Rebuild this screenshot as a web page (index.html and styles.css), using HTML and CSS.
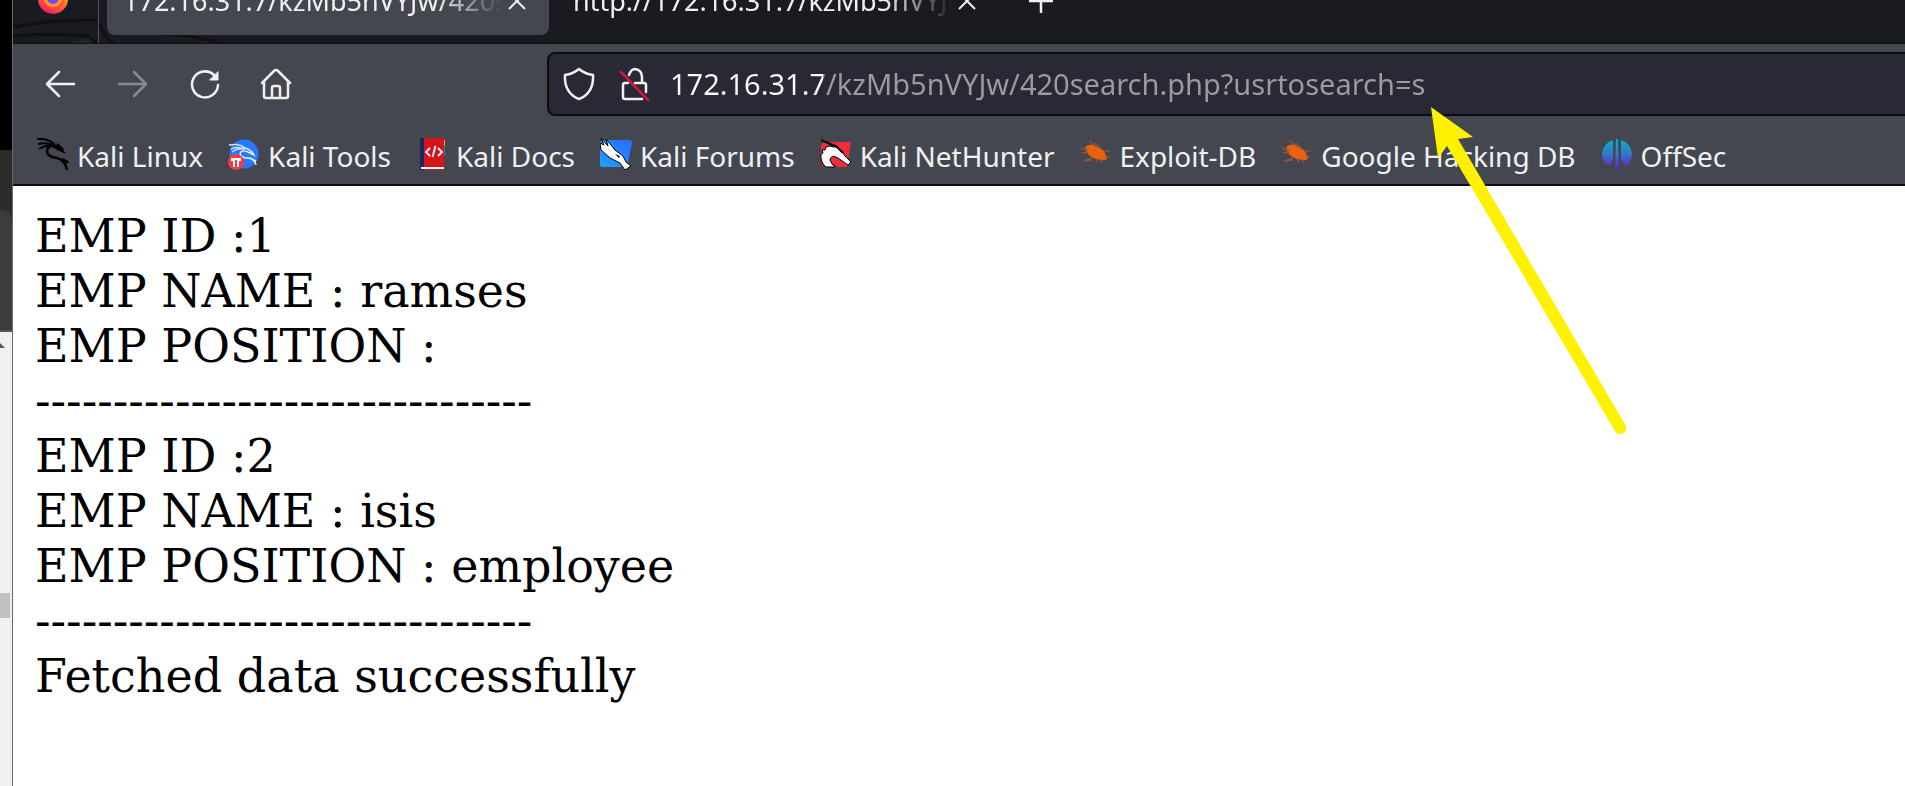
FILE: index.html
```html
<!DOCTYPE html>
<html lang="en">
<head>
<meta charset="utf-8">
<title>172.16.31.7/kzMb5nVYJw/420search.php</title>
<link rel="stylesheet" href="styles.css">
</head>
<body>
<aside class="behind">
  <div class="behind-dark"></div>
  <div class="behind-head"><div class="behind-tab"></div></div>
  <div class="behind-scroll">
    <svg class="behind-arrow" width="5" height="5" viewBox="0 0 5 5"><path d="M0 0L5 5H0Z" fill="#555"/></svg>
    <div class="behind-thumb"></div>
  </div>
</aside>
<div class="browser">
  <header class="tabstrip">
    <svg class="swirl" width="240" height="44" viewBox="0 0 240 44" fill="none"><path d="M0 27Q40 19 84 20" stroke="#0f1014" stroke-width="3"/><path d="M0 36Q40 33 74 36L84 44" stroke="#0f1014" stroke-width="3"/><path d="M52 44L76 38L80 44Z" fill="#23242b"/><path d="M86 24Q92 38 102 44M150 34Q180 35 212 44" stroke="#0f1014" stroke-width="3"/></svg>
    <div class="pinned">
      <svg width="32" height="32" viewBox="0 0 32 32"><defs><linearGradient id="ff" x1=".8" y1="0" x2=".3" y2="1"><stop offset="0" stop-color="#ffe03a"/><stop offset=".5" stop-color="#ff7a1f"/><stop offset="1" stop-color="#f5156c"/></linearGradient></defs><circle cx="16" cy="16" r="15" fill="url(#ff)"/><path d="M6 14Q10 25 21 23Q27 20 26 11Q29 22 21 26Q10 29 6 14Z" fill="#ff4b3a"/><circle cx="16" cy="15" r="9" fill="#ff9b26"/><circle cx="16" cy="15" r="6" fill="#7a4be8"/></svg>
    </div>
    <div class="tab tab-active">
      <button class="tab-title">172.16.31.7/kzMb5nVYJw/420search.php</button>
      <button class="tab-close" aria-label="Close tab"><svg width="18" height="18" viewBox="0 0 18 18" fill="none" stroke="#f0f0f0" stroke-width="2"><path d="M1 1L17 17M17 1L1 17"/></svg></button>
    </div>
    <div class="tab">
      <button class="tab-title">http://172.16.31.7/kzMb5nVYJw/index.php</button>
      <button class="tab-close" aria-label="Close tab"><svg width="18" height="18" viewBox="0 0 18 18" fill="none" stroke="#f0f0f0" stroke-width="2"><path d="M1 1L17 17M17 1L1 17"/></svg></button>
    </div>
    <button class="newtab" aria-label="New tab"><svg width="24" height="24" viewBox="0 0 24 24" fill="none" stroke="#f0f0f0" stroke-width="2.500"><path d="M12 0V24M0 12H24"/></svg></button>
  </header>
  <nav class="toolbar">
    <div class="navs">
      <button aria-label="Back"><svg width="32" height="32" viewBox="0 0 32 32" class="line"><path d="M29 16H3M14 4L2 16L14 28"/></svg></button>
      <button aria-label="Forward" disabled><svg width="32" height="32" viewBox="0 0 32 32" class="line"><path d="M2 16H28M17 4L29 16L17 28"/></svg></button>
      <button aria-label="Reload"><svg width="32" height="32" viewBox="0 0 32 32" class="line"><path d="M25 7A13 13 0 1 0 29 17"/><path d="M29 4V12H21Z" fill="#f0f0f0" stroke-width="1"/></svg></button>
      <button aria-label="Home"><svg width="32" height="32" viewBox="0 0 32 32" class="line"><path d="M1 15L13 3Q15 1 17 3L29 15M3 14V28Q3 30 5 30H25Q27 30 27 28V14M11 30V20Q11 18 13 18H17Q19 18 19 20V30"/></svg></button>
    </div>
    <div class="urlbar">
      <div class="site-icons">
        <svg width="32" height="34" viewBox="0 0 32 34" class="line"><path d="M16 2Q22 7 30 8Q31 26 16 32Q1 26 2 8Q10 7 16 2Z"/></svg>
        <svg width="32" height="34" viewBox="0 0 32 34" class="line"><path d="M10 8Q12 2 16 2Q23 3 23 10V16M16 16H25Q27 16 27 18V25M9 16H6Q4 16 4 18V30Q4 32 6 32H23"/><path d="M2 5L29 33" stroke="#e8123f"/></svg>
      </div>
      <input class="url" type="text" aria-label="Address" value="172.16.31.7/kzMb5nVYJw/420search.php?usrtosearch=s">
    </div>
  </nav>
  <nav class="bookmarks">
    <a href="#"><svg width="32" height="32" viewBox="0 0 32 32" fill="none" stroke="#000" stroke-width="2"><path d="M0 1Q12 0 18 7M1 6Q11 4 18 8M2 11Q8 7 17 8"/><path d="M17 7Q10 8 10 14Q11 19 20 20Q28 22 30 32M23 21Q29 22 31 25M20 6L26 12" stroke-width="2.500"/><path d="M17 6Q25 8 29 16L22 13L15 9Z" fill="#000" stroke="none"/></svg><span>Kali Linux</span></a>
    <a href="#"><svg width="32" height="32" viewBox="0 0 32 32" fill="none"><circle cx="16" cy="16" r="14.500" fill="#2878ff"/><path d="M1 7Q12 5 17 10M3 11Q9 8 17 11M4 14Q9 10 17 11" stroke="#cfe2ff" stroke-width="1.500"/><path d="M16 10Q23 11 26 17L20 14Q13 11 12 16Q13 20 20 20Q27 21 28 27M22 20L28 23" stroke="#e9f2ff" stroke-width="1.500"/><circle cx="8" cy="24" r="8" fill="#f43a42"/><path d="M3 21H13M6 21V29M10 21V29M4 20V23M12 20V23" stroke="#fff" stroke-width="2"/></svg><span>Kali Tools</span></a>
    <a href="#"><svg width="32" height="32" viewBox="0 0 32 32" fill="none"><path d="M4 0H9V32H4Z" fill="#142a5c"/><path d="M8 0H28V32H8Z" fill="#d5141c"/><path d="M5 29H28V31H5Z" fill="#fff"/><path d="M28 2H29V8H28Z" fill="#ff9a17"/><path d="M28 8H29V14H28Z" fill="#16a36b"/><path d="M28 14H29V18H28Z" fill="#2575e8"/><path d="M14 10L10 14L14 18M22 10L26 14L22 18M19.500 8L16.500 19" stroke="#fff" stroke-width="1.800"/></svg><span>Kali Docs</span></a>
    <a href="#"><svg width="32" height="32" viewBox="0 0 32 32"><defs><linearGradient id="kf" x1="0" y1="1" x2="1" y2="0"><stop offset="0" stop-color="#20a0ff"/><stop offset="1" stop-color="#2a6bff"/></linearGradient></defs><path d="M2 2H29Q32 2 32 5L27 29H2Q0 29 0 26V4Z" fill="url(#kf)"/><path d="M1 0L8 8L6 1L15 12L23 18L26 24L31 28L25 32L20 25L10 20L1 12L0 5L4 7Z" fill="#fff" stroke="#000" stroke-width="1"/><path d="M15 16L20 18L19 20Z"/></svg><span>Kali Forums</span></a>
    <a href="#"><svg width="32" height="32" viewBox="0 0 32 32"><path d="M4 4H31L27 29H1V7Z" fill="#ef2c3b"/><path d="M1 17L18 29H1Z" fill="#a9145a"/><path d="M1 2L15 9Q22 11 25 18L31 24L28 27L18 20Q11 16 10 22Q11 26 15 29H6Q0 24 1 16L3 15L2 12L5 12L6 9Q10 7 14 9Z" fill="#fff" stroke="#000"/><path d="M1 2L16 8L23 15" fill="none" stroke="#111" stroke-width="2"/></svg><span>Kali NetHunter</span></a>
    <a href="#"><svg width="32" height="32" viewBox="0 0 32 32"><path d="M6 8Q12 5 16 8Q22 10 25 15L27 20Q26 23 21 22Q13 21 9 17Q4 13 6 8Z" fill="#ec610c"/><path d="M9 3L17 9M15 5L21 11M1 10L8 12M2 15L8 14M24 13L30 13M25 18L29 19M16 21L18 24M12 20L4 23L12 22M21 21L22 25" fill="none" stroke="#8d543a" stroke-width="1.500"/></svg><span>Exploit-DB</span></a>
    <a href="#"><svg width="32" height="32" viewBox="0 0 32 32"><path d="M6 8Q12 5 16 8Q22 10 25 15L27 20Q26 23 21 22Q13 21 9 17Q4 13 6 8Z" fill="#ec610c"/><path d="M9 3L17 9M15 5L21 11M1 10L8 12M2 15L8 14M24 13L30 13M25 18L29 19M16 21L18 24M12 20L4 23L12 22M21 21L22 25" fill="none" stroke="#8d543a" stroke-width="1.500"/></svg><span>Google Hacking DB</span></a>
    <a href="#"><svg width="32" height="32" viewBox="0 0 32 32"><defs><linearGradient id="os" x1="0" y1="0" x2="0" y2="32" gradientUnits="userSpaceOnUse"><stop offset="0" stop-color="#06b4c8"/><stop offset=".5" stop-color="#3478cc"/><stop offset="1" stop-color="#6418d0"/></linearGradient></defs><path d="M12 2V22L7 28Q1 23 1 16Q2 5 12 2ZM20 2V22L25 28Q31 23 31 16Q30 5 20 2ZM15 1H17L18 31H14Z" fill="url(#os)"/></svg><span>OffSec</span></a>
  </nav>
  <main class="page">
    EMP ID :1<br>
    EMP NAME : ramses<br>
    EMP POSITION :<br>
    --------------------------------<br>
    EMP ID :2<br>
    EMP NAME : isis<br>
    EMP POSITION : employee<br>
    --------------------------------<br>
    Fetched data successfully
  </main>
</div>
<svg class="pointer" width="200" height="336" viewBox="0 0 200 336"><path d="M3 3L45 33L30 35L198 322Q199 331 190 330L187 327L19 42L10 54Z" fill="#fff200"/></svg>
</body>
</html>
```
FILE: styles.css
```css
* { box-sizing: border-box; }
body {
  margin: 0;
  min-height: 100vh;
  display: flex;
  overflow: hidden;
  background: #fff;
  font-family: "Noto Sans", sans-serif;
  color: #f0f0f0;
}
button {
  margin: 0;
  padding: 0;
  border: 0;
  background: none;
  color: inherit;
  font: inherit;
}
svg { display: block; flex: none; }
.line {
  fill: none;
  stroke: #f0f0f0;
  stroke-width: 2.5;
  stroke-linecap: round;
  stroke-linejoin: round;
}

.behind {
  flex: none;
  width: 13px;
  display: flex;
  flex-direction: column;
  border-right: 1px solid #6a6a6a;
}
.behind-dark { height: 150px; background: #000; }
.behind-head {
  height: 182px;
  padding-top: 60px;
  background: #2b2b2b;
  border-bottom: 2px solid #555;
}
.behind-tab {
  height: 100%;
  background: #3c3c3c;
  border-top-right-radius: 10px;
}
.behind-scroll { flex: 1; padding-top: 11px; background: #f0f0f0; }
.behind-thumb { width: 10px; height: 25px; margin-top: 245px; background: #c1c1c1; }

.browser { flex: 1; min-width: 0; }
.tabstrip {
  position: relative;
  display: flex;
  align-items: flex-end;
  height: 44px;
  padding-bottom: 8px;
  overflow: hidden;
  background: #1a1b20;
  border-bottom: 1px solid #101116;
}
.swirl { position: absolute; left: 0; top: 0; }
.pinned {
  position: relative;
  flex: none;
  width: 86px;
  height: 68px;
  margin-bottom: -8px;
  padding: 8px 0 0 24px;
  border-right: 1px solid #55575e;
}
.tab {
  position: relative;
  flex: none;
  display: flex;
  align-items: center;
  justify-content: space-between;
  width: 442px;
  height: 68px;
  margin-left: 8px;
  padding: 0 23px 0 16px;
  border-radius: 8px;
}
.tab-active { background: #44474f; }
.tab-title {
  width: 380px;
  overflow: hidden;
  text-align: left;
  white-space: nowrap;
  font-size: 27px;
  line-height: 36px;
  mask-image: linear-gradient(to right, #000 82%, transparent);
}
.newtab { height: 68px; margin-left: 30px; }
.newtab svg { margin: auto; }

.toolbar {
  display: flex;
  align-items: center;
  gap: 254px;
  height: 80px;
  padding-left: 32px;
  background: #44474f;
}
.navs { flex: none; display: flex; gap: 40px; }
.navs button:disabled { opacity: 0.4; }
.urlbar {
  flex: 1;
  display: flex;
  align-items: center;
  gap: 19px;
  height: 64px;
  padding-left: 14px;
  background: #282934;
  border: 2px solid #0c0d12;
  border-right: 0;
  border-radius: 8px 0 0 8px;
}
.site-icons { flex: none; display: flex; gap: 24px; }
.url {
  flex: 1;
  min-width: 0;
  padding: 0;
  border: 0;
  font: 29px/40px "Noto Sans", sans-serif;
  color: transparent;
  background: linear-gradient(to right, #fbfbfe 153px, #9b9ca1 153px);
  background-clip: text;
}
.bookmarks {
  display: flex;
  align-items: center;
  gap: 25px;
  height: 62px;
  padding-left: 24px;
  background: #44474f;
  border-bottom: 2px solid #0c0d12;
}
.bookmarks a {
  display: flex;
  align-items: center;
  gap: 8px;
  white-space: nowrap;
  color: inherit;
  text-decoration: none;
  font-size: 28px;
  line-height: 36px;
}
.bookmarks span { padding-top: 4px; }
.page {
  padding: 23px 22px;
  color: #000;
  font: 46px/55px "DejaVu Serif", serif;
}
.pointer { position: absolute; left: 1428px; top: 104px; }
```
